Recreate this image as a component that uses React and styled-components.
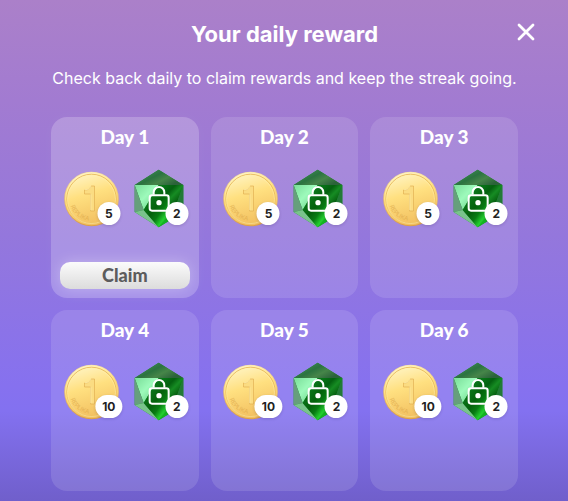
import React, { useId } from "react";
import styled, { createGlobalStyle, css } from "styled-components";

const GlobalStyle = createGlobalStyle`
  * { box-sizing: border-box; }
  html, body, #root { min-height: 100vh; }
  body { margin: 0; }
  #root { display: grid; }
`;

const Dialog = styled.main`
  position: relative;
  padding: 18px 50px 10px 51px;
  color: #fff;
  font-family: Inter, "Liberation Sans", sans-serif;
  background: linear-gradient(#ab80c9 0%, #a27bd1 20%, #9477dc 47%, #8671ef 77%, #8371f0 82%, #705fcb 100%);
`;

const Title = styled.h1`
  margin: 0;
  text-align: center;
  font-size: 22px;
  line-height: 32px;
  font-weight: 700;
`;

const Subtitle = styled.p`
  margin: 16px 0 27px;
  text-align: center;
  white-space: nowrap;
  font-size: 16px;
  line-height: 24px;
`;

const CloseButton = styled.button`
  position: absolute;
  top: 20px;
  right: 30px;
  display: grid;
  place-items: center;
  width: 24px;
  height: 24px;
  padding: 0;
  border: 0;
  background: none;
  cursor: pointer;
`;

const Days = styled.ul`
  display: grid;
  grid-template-columns: repeat(3, 1fr);
  gap: 12px;
  margin: 0;
  padding: 0;
  list-style: none;
`;

const Card = styled.li`
  display: flex;
  flex-direction: column;
  min-height: 181px;
  padding: 8px 9px;
  border-radius: 16px;
  background: rgba(255, 255, 255, 0.12);
  ${(p) =>
    p.$active &&
    css`
      background: rgba(255, 255, 255, 0.21);
      box-shadow: 0 0 16px rgba(255, 255, 255, 0.03);
    `}
`;

const DayName = styled.h2`
  margin: 0;
  text-align: center;
  font-family: Lato, Inter, sans-serif;
  font-size: 19px;
  line-height: 24px;
  font-weight: 900;
`;

const Rewards = styled.div`
  display: flex;
  justify-content: center;
  gap: 15px;
  padding: 20px 2px 0 0;
`;

const Reward = styled.div`
  position: relative;
  display: flex;
  align-items: center;
  height: 59px;
`;

const Count = styled.span`
  position: absolute;
  top: 33px;
  left: ${(p) => (p.$gem ? "43px" : "45px")};
  transform: translateX(-50%);
  min-width: 23px;
  height: 23px;
  padding: 0 7px;
  border-radius: 12px;
  background: #fff;
  color: #222;
  text-align: center;
  font-size: 12px;
  line-height: 24px;
  font-weight: 700;
  box-shadow: 0 1px 3px rgba(40, 20, 60, 0.18);
`;

const ClaimButton = styled.button`
  margin-top: auto;
  height: 27px;
  margin-bottom: 1px;
  padding: 0;
  border: 0;
  border-radius: 10px;
  background: linear-gradient(#fbfbfb, #dcdcdc);
  box-shadow: 0 0 14px rgba(255, 255, 255, 0.3);
  color: #5c5c5c;
  font-family: Lato, Inter, sans-serif;
  font-size: 18px;
  line-height: 27px;
  font-weight: 900;
  cursor: pointer;
`;

const LegendText = styled.text`
  font-family: Inter, sans-serif;
  font-size: 6px;
  font-weight: 400;
  fill: #dda94b;
  opacity: 0.75;
`;

function Coin() {
  const id = useId();
  return (
    <svg width="55" height="56" viewBox="0 0 55 56" role="img" aria-label="Coins">
      <defs>
        <linearGradient id={id + "f"} x1="0.35" y1="0" x2="0.65" y2="1">
          <stop offset="0" stopColor="#fff4c4" />
          <stop offset="0.4" stopColor="#ffe080" />
          <stop offset="1" stopColor="#f1bd5d" />
        </linearGradient>
        <linearGradient id={id + "r"} x1="0" y1="0" x2="0" y2="1">
          <stop offset="0" stopColor="#f6dda0" />
          <stop offset="1" stopColor="#dc9e45" />
        </linearGradient>
        <path id={id + "a"} d="M6.500 35A22.500 22.500 0 0 0 48 37" />
      </defs>
      <circle cx="27.5" cy="28" r="27.3" fill={`url(#${id}r)`} />
      <circle cx="27.5" cy="27.8" r="26.5" fill={`url(#${id}f)`} />
      <circle cx="27.5" cy="27.8" r="24.6" fill="none" stroke="#e5b450" strokeWidth="0.8" />
      <circle cx="27.5" cy="28.5" r="24" fill="none" stroke="#fff0ad" strokeWidth="0.6" />
      <path d="M20.500 19c4 0 5.500-1.200 6.500-4h3.500v25h-4v-17h-6z" fill="#fbdc82" stroke="#dea94b" strokeWidth="0.6" />
      <path d="M21 18.700c3.800 0 5-1.200 6-3.800M26.800 23.200v16" fill="none" stroke="#fff1b3" strokeWidth="0.7" />
      <LegendText>
        <textPath href={`#${id}a`}>REPLIKA</textPath>
      </LegendText>
    </svg>
  );
}

function Gem() {
  const id = useId();
  return (
    <svg width="50" height="59" viewBox="25 29 150 177" role="img" aria-label="Locked gems">
      <defs>
        <linearGradient id={id + "t"} x1="0" y1="0" x2="1" y2="0.6">
          <stop offset="0" stopColor="#4e9862" />
          <stop offset="0.5" stopColor="#2b7340" />
          <stop offset="0.72" stopColor="#468549" />
          <stop offset="1" stopColor="#2b623a" />
        </linearGradient>
        <linearGradient id={id + "m"} x1="0" y1="0" x2="1" y2="1">
          <stop offset="0" stopColor="#79dd98" />
          <stop offset="0.45" stopColor="#9dfabb" />
          <stop offset="1" stopColor="#5fca7b" />
        </linearGradient>
        <linearGradient id={id + "r"} x1="0.1" y1="0.1" x2="0.9" y2="0.9">
          <stop offset="0" stopColor="#067517" />
          <stop offset="0.3" stopColor="#046010" />
          <stop offset="0.5" stopColor="#168c23" />
          <stop offset="0.75" stopColor="#075f10" />
          <stop offset="1" stopColor="#12a620" />
        </linearGradient>
        <linearGradient id={id + "c"} x1="0.1" y1="0.1" x2="0.9" y2="0.9">
          <stop offset="0" stopColor="#108526" />
          <stop offset="0.45" stopColor="#04610c" />
          <stop offset="0.62" stopColor="#087b13" />
          <stop offset="0.78" stopColor="#22cf2e" />
          <stop offset="1" stopColor="#07910f" />
        </linearGradient>
      </defs>
      <path d="M99 31 173 77V158L99 204 27 158V77z" fill="#17912a" />
      <path d="M99 31 173 77H27z" fill={`url(#${id}t)`} />
      <path d="M27 77H99L54 152z" fill={`url(#${id}m)`} />
      <path d="M27 77 54 152 27 158z" fill="#669f7c" />
      <path d="M27 158 54 152 99 204z" fill="#79c38c" />
      <path d="M99 77H173L146 152z" fill={`url(#${id}r)`} />
      <path d="M173 77V158L146 152z" fill="#237a37" />
      <path d="M99 77 146 152 99 204 54 152z" fill={`url(#${id}c)`} />
      <path d="M146 152 173 158 99 204z" fill="#13b721" />
      <rect x="72" y="108" width="57" height="46" rx="7" fill="none" stroke="#fff" strokeWidth="6" />
      <path d="M84 106V99a16 16 0 0 1 32 0V106" fill="none" stroke="#fff" strokeWidth="6" />
      <circle cx="100" cy="130" r="8" fill="#fff" />
    </svg>
  );
}

const days = [
  { name: "Day 1", coins: 5, gems: 2, active: true },
  { name: "Day 2", coins: 5, gems: 2 },
  { name: "Day 3", coins: 5, gems: 2 },
  { name: "Day 4", coins: 10, gems: 2 },
  { name: "Day 5", coins: 10, gems: 2 },
  { name: "Day 6", coins: 10, gems: 2 },
];

export default function App() {
  return (
    <>
      <GlobalStyle />
      <Dialog>
        <Title>Your daily reward</Title>
        <CloseButton type="button" aria-label="Close">
          <svg width="18" height="18" viewBox="0 0 18 18">
            <path d="M2 2 16 16M16 2 2 16" stroke="#fff" strokeWidth="2.8" strokeLinecap="round" />
          </svg>
        </CloseButton>
        <Subtitle>Check back daily to claim rewards and keep the streak going.</Subtitle>
        <Days>
          {days.map((day) => (
            <Card key={day.name} $active={day.active}>
              <DayName>{day.name}</DayName>
              <Rewards>
                <Reward>
                  <Coin />
                  <Count>{day.coins}</Count>
                </Reward>
                <Reward>
                  <Gem />
                  <Count $gem>{day.gems}</Count>
                </Reward>
              </Rewards>
              {day.active && <ClaimButton type="button">Claim</ClaimButton>}
            </Card>
          ))}
        </Days>
      </Dialog>
    </>
  );
}
